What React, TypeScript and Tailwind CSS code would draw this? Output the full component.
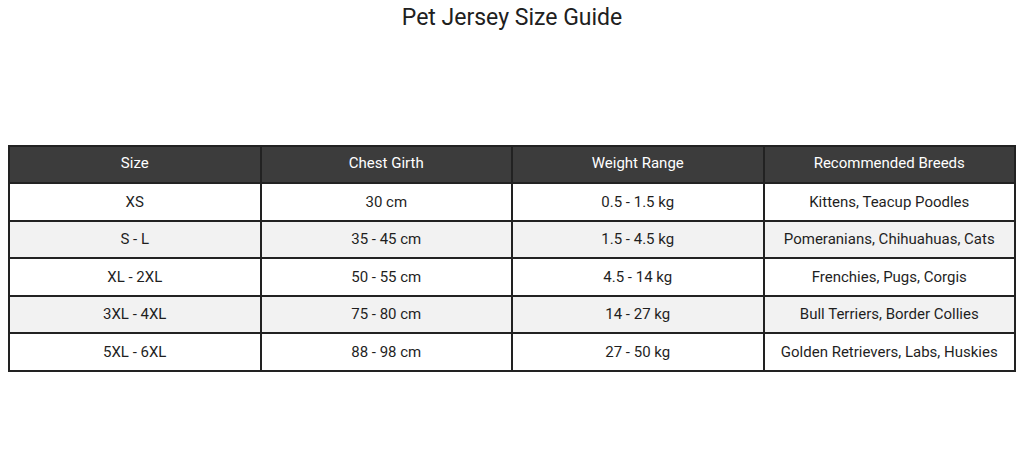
const ROWS = [
  ['XS', '30 cm', '0.5 - 1.5 kg', 'Kittens, Teacup Poodles'],
  ['S - L', '35 - 45 cm', '1.5 - 4.5 kg', 'Pomeranians, Chihuahuas, Cats'],
  ['XL - 2XL', '50 - 55 cm', '4.5 - 14 kg', 'Frenchies, Pugs, Corgis'],
  ['3XL - 4XL', '75 - 80 cm', '14 - 27 kg', 'Bull Terriers, Border Collies'],
  ['5XL - 6XL', '88 - 98 cm', '27 - 50 kg', 'Golden Retrievers, Labs, Huskies'],
];

const HEADERS = ['Size', 'Chest Girth', 'Weight Range', 'Recommended Breeds'];

export default function App() {
  return (
    <div className="h-[476px] w-[1024px] bg-white px-2 font-['Roboto',sans-serif] text-[#1f1f1f]">
      <h1 className="pt-[4px] text-center text-[23px] leading-[28px] font-normal text-[#202020]">
        Pet Jersey Size Guide
      </h1>
      <table className="mt-[113px] w-full table-fixed border-collapse border-2 border-[#555]">
        <thead>
          <tr className="h-[37px] bg-[#3c3c3c] text-white">
            {HEADERS.map((h) => (
              <th key={h} className="border-2 border-[#222] pb-[2px] text-[15px] font-normal">
                {h}
              </th>
            ))}
          </tr>
        </thead>
        <tbody>
          {ROWS.map((row, i) => (
            <tr key={row[0]} className={`h-[37.5px] ${i % 2 === 1 ? 'bg-[#f2f2f2]' : 'bg-white'}`}>
              {row.map((cell, j) => (
                <td key={j} className="border-2 border-[#222] text-center text-[15px]">
                  {cell}
                </td>
              ))}
            </tr>
          ))}
        </tbody>
      </table>
    </div>
  );
}
